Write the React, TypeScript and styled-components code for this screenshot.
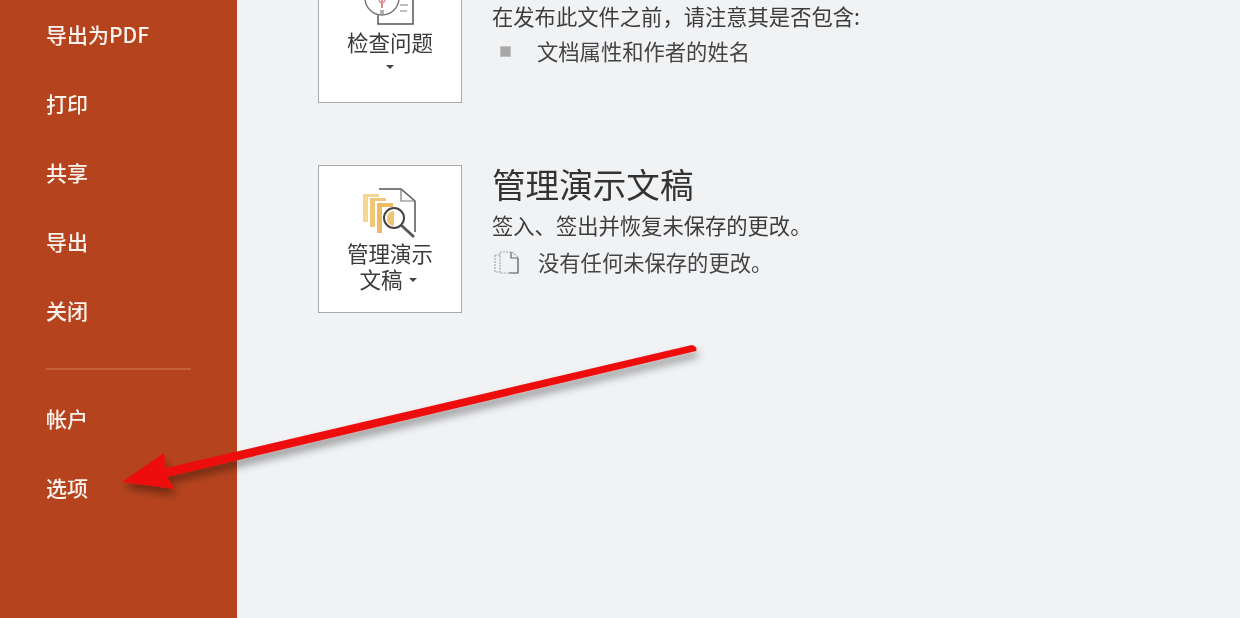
import React from "react";
import styled, { createGlobalStyle } from "styled-components";

const Global = createGlobalStyle`
  html, body { margin: 0; padding: 0; }
  body { width: 1240px; height: 618px; overflow: hidden; background: #f1f2f4; }
  * { box-sizing: border-box; }
`;

const FONT = `"Noto Sans CJK SC", "Noto Sans", sans-serif`;

const Page = styled.div`
  position: relative;
  width: 1240px;
  height: 618px;
  display: flex;
  overflow: hidden;
  font-family: ${FONT};
  background: #f1f2f4;
`;

const Sidebar = styled.nav`
  width: 237px;
  flex: none;
  background: #b5441e;
  padding: 17px 46px 0 46px;
  color: #fff;
  filter: blur(0.45px);
`;

const NavItem = styled.div`
  height: 34px;
  line-height: 34px;
  font-size: 21px;
  font-weight: 500;
  margin-bottom: 35px;
  color: #fdf3ee;
  white-space: nowrap;
`;

const Divider = styled.div`
  height: 2px;
  background: #c4603a;
  margin: 41px 0 31px 0;
`;

const Main = styled.main`
  flex: 1;
  padding: 0 0 0 81px;
  margin-top: -45px;
  display: flex;
  flex-direction: column;
  gap: 62px;
  color: #333;
  filter: blur(0.45px);
`;

const Section = styled.section`
  display: flex;
  gap: 30px;
`;

const ActionButton = styled.div`
  width: 144px;
  height: 148px;
  flex: none;
  background: #fff;
  border: 1px solid #a9a9a9;
  display: flex;
  flex-direction: column;
  align-items: center;
`;

const IconSlot = styled.div<{ $top: number; $height: number }>`
  margin-top: ${(p) => p.$top}px;
  height: ${(p) => p.$height}px;
  display: flex;
  justify-content: center;
`;

const ButtonLabel = styled.div`
  font-size: 21.5px;
  line-height: 26px;
  text-align: center;
  color: #3a3a3a;
  white-space: nowrap;
`;

const Caret = styled.span<{ $block?: boolean }>`
  display: ${(p) => (p.$block ? "block" : "inline-block")};
  width: 0;
  height: 0;
  border-left: 4px solid transparent;
  border-right: 4px solid transparent;
  border-top: 4px solid #444;
  margin: ${(p) => (p.$block ? "10px 0 0 0" : "0 4px 4px 6px")};
  vertical-align: middle;
`;

const Details = styled.div`
  display: flex;
  flex-direction: column;
  margin-top: -3px;
`;

const Heading = styled.h2`
  margin: 0;
  font-size: 33.6px;
  font-weight: 400;
  line-height: 44px;
  color: #333;
  white-space: nowrap;
`;

const Description = styled.div<{ $top: number }>`
  margin-top: ${(p) => p.$top}px;
  font-size: 21.3px;
  line-height: 28px;
  color: #3c3c3c;
  white-space: nowrap;
`;

const ListRow = styled.div<{ $gap: number; $top: number }>`
  display: flex;
  align-items: center;
  gap: ${(p) => p.$gap}px;
  margin-top: ${(p) => p.$top}px;
  font-size: 21.3px;
  line-height: 28px;
  color: #444;
  white-space: nowrap;
`;

const Bullet = styled.span`
  width: 11px;
  height: 11px;
  margin-left: 8px;
  background: #a8a8a8;
  border: 1px solid #c2c2c2;
`;

const ArrowLayer = styled.svg`
  position: absolute;
  left: 0;
  top: 0;
  pointer-events: none;
`;

const InspectIcon = () => (
  <svg width="64" height="42" viewBox="0 0 64 42" style={{ marginTop: 2 }}>
    <path d="M20 32 V41 H55 V8" fill="none" stroke="#555" strokeWidth="1.5" />
    <circle cx="24" cy="15" r="17" fill="#fff" stroke="#777" strokeWidth="1.4" />
    <path d="M24 17 v8" stroke="#d9908a" strokeWidth="2" />
    <circle cx="24" cy="17" r="2.8" fill="none" stroke="#d9908a" strokeWidth="1.3" />
    <path d="M22 28 h4 M22 30 h4" stroke="#999" strokeWidth="1.5" />
    <path d="M42 22 h8 M42 28 h7" stroke="#aaa" strokeWidth="1.3" />
  </svg>
);

const ManageIcon = () => (
  <svg width="58" height="54" viewBox="0 0 58 54">
    <path d="M18 3 H40 L54 15 V46" fill="none" stroke="#555" strokeWidth="1.5" />
    <path d="M40 3 V15 H54" fill="none" stroke="#777" strokeWidth="1.2" />
    <path d="M2 8 H18 V11 H7 V36 H2 Z" fill="#f4d592" />
    <path d="M9 12 H25 V15 H14 V41 H9 Z" fill="#f1c677" />
    <path d="M16 17 H32 V21 H21 V47 H16 Z" fill="#eebb62" />
    <path d="M26 32 a7 7 0 0 1 7 -7 V40 a7 7 0 0 1 -7 -8" fill="#f0c475" />
    <circle cx="33" cy="32" r="10" fill="none" stroke="#444" strokeWidth="2" />
    <path d="M40.5 39.5 L53 51" stroke="#555" strokeWidth="2.8" />
  </svg>
);

const PagesIcon = () => (
  <svg width="28" height="26" viewBox="0 0 28 26">
    <path d="M3 6 H8 M3 6 V23 H8" fill="none" stroke="#aaa" strokeWidth="1.2" strokeDasharray="2 1" />
    <path d="M8 3 H20 L26 8 V24 H8 Z" fill="none" stroke="#aaa" strokeWidth="1.2" strokeDasharray="2 1" />
    <path d="M19 3 V9 H26 M26 9 V24 H17" fill="none" stroke="#666" strokeWidth="1.2" />
  </svg>
);

const nav1 = ["导出为PDF", "打印", "共享", "导出", "关闭"];
const nav2 = ["帐户", "选项"];

export default function App() {
  return (
    <Page>
      <Global />
      <Sidebar>
        {nav1.map((t) => (
          <NavItem key={t}>{t}</NavItem>
        ))}
        <Divider />
        {nav2.map((t) => (
          <NavItem key={t}>{t}</NavItem>
        ))}
      </Sidebar>
      <Main>
        <Section>
          <ActionButton>
            <IconSlot $top={25} $height={48}>
              <InspectIcon />
            </IconSlot>
            <ButtonLabel>检查问题</ButtonLabel>
            <Caret $block />
          </ActionButton>
          <Details>
            <Description $top={50}>在发布此文件之前，请注意其是否包含:</Description>
            <ListRow $gap={26} $top={7}>
              <Bullet />
              文档属性和作者的姓名
            </ListRow>
          </Details>
        </Section>
        <Section>
          <ActionButton>
            <IconSlot $top={20} $height={54}>
              <ManageIcon />
            </IconSlot>
            <ButtonLabel>管理演示</ButtonLabel>
            <ButtonLabel>
              文稿
              <Caret />
            </ButtonLabel>
          </ActionButton>
          <Details>
            <Heading>管理演示文稿</Heading>
            <Description $top={5}>签入、签出并恢复未保存的更改。</Description>
            <ListRow $gap={18} $top={9}>
              <PagesIcon />
              没有任何未保存的更改。
            </ListRow>
          </Details>
        </Section>
      </Main>
      <ArrowLayer width="1240" height="618" viewBox="0 0 1240 618">
        <defs>
          <filter id="arrowShadow" x="-10%" y="-30%" width="120%" height="170%">
            <feDropShadow dx="2" dy="6" stdDeviation="4" floodColor="#000" floodOpacity="0.4" />
          </filter>
        </defs>
        <path
          d="M692 345 Q698 347 696 351 L167 477 L175 489 L122 482 L164 453 L166 468 Z"
          fill="#ee0c0d"
          filter="url(#arrowShadow)"
        />
      </ArrowLayer>
    </Page>
  );
}
